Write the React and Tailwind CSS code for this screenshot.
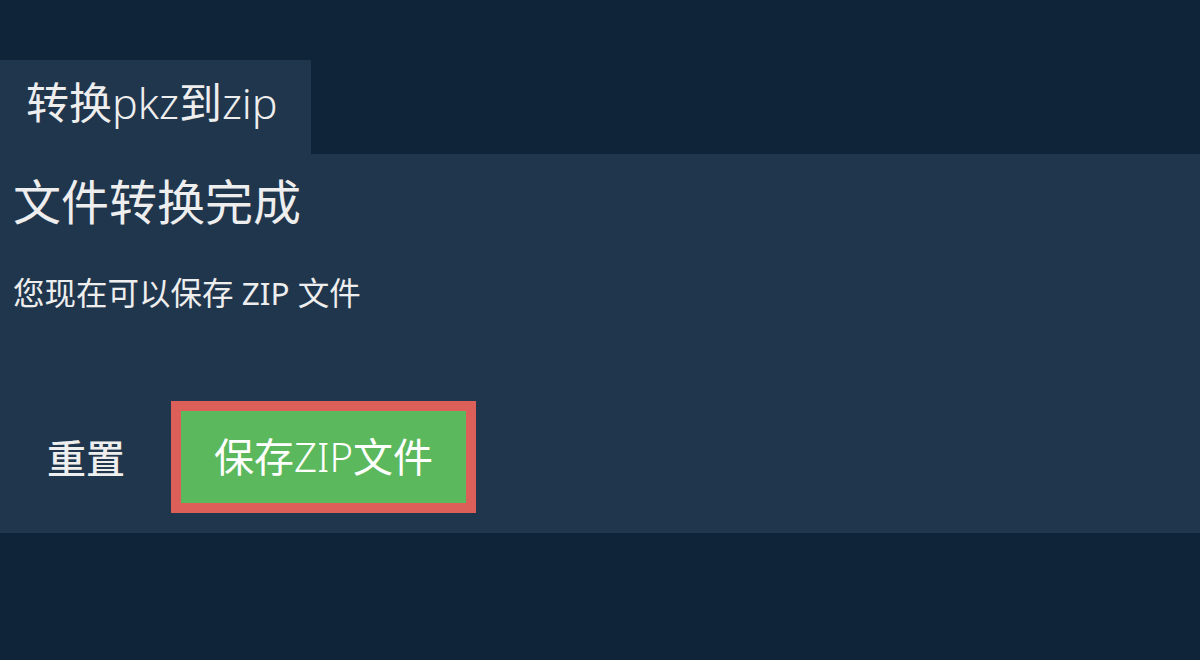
export default function App() {
  return (
    <div
      className="w-[1200px] h-[660px] bg-[#0f2339] text-[#eeeeee] overflow-hidden"
      style={{ fontFamily: '"Noto Sans", "Noto Sans CJK SC", sans-serif' }}
    >
      <div className="h-[60px]" />
      <div className="w-[311px] h-[94px] bg-[#20364d] flex items-center pl-[26px] pb-[10px]">
        <span className="text-[43px] leading-none">
          <span className="font-normal">转换</span>
          <span className="font-light">pkz</span>
          <span className="font-normal">到</span>
          <span className="font-light">zip</span>
        </span>
      </div>
      <div className="h-[379px] bg-[#20364d] pl-[13px] pt-[18px]">
        <h1 className="text-[48px] leading-[60px] font-normal">文件转换完成</h1>
        <p className="mt-[40px] text-[31.5px] leading-[42px]">您现在可以保存 ZIP 文件</p>
        <div className="mt-[87px] flex items-center">
          <button className="h-[112px] px-[34px] text-[39px] font-medium leading-none text-[#eeeeee]">
            重置
          </button>
          <button className="ml-[12px] border-[10px] border-[#dc5f5a] bg-[#5cb85c] w-[305px] h-[112px] text-[40px] leading-none text-white flex items-center justify-center">
            <span>保存</span>
            <span className="font-light">ZIP</span>
            <span>文件</span>
          </button>
        </div>
      </div>
    </div>
  );
}
